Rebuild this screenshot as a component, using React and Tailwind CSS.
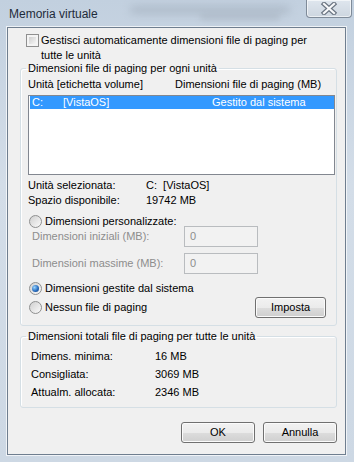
import React from 'react'

function Checkbox() {
  return (
    <div className="w-[13px] h-[13px] border border-[#8f8f8f] bg-[#f4f4f4] p-[2px] shrink-0">
      <div className="w-full h-full bg-[linear-gradient(135deg,#cfcfcf,#f6f6f6)]" />
    </div>
  )
}

function Radio({ checked }) {
  return (
    <div className="w-[13px] h-[13px] rounded-full border border-[#8e8f8f] bg-[linear-gradient(135deg,#cfcfcf,#fbfbfb)] flex items-center justify-center shrink-0">
      {checked && (
        <div className="w-[7px] h-[7px] rounded-full bg-[radial-gradient(circle_at_35%_35%,#9ad6ff,#2a6ec0_55%,#0c3a78)]" />
      )}
    </div>
  )
}

function Button({ children, className }) {
  return (
    <div
      className={`h-[21px] rounded-[3px] border border-[#707070] bg-[linear-gradient(#f2f2f2_0%,#ebebeb_50%,#dddddd_50%,#cfcfcf_100%)] shadow-[inset_0_0_0_1px_#fbfbfb] flex items-center justify-center text-black ${className}`}
    >
      {children}
    </div>
  )
}

function CloseGlyph() {
  return (
    <svg width="18" height="13" viewBox="0 0 18 13">
      <path d="M4 2 L14 11 M14 2 L4 11" stroke="#6b7582" strokeWidth="4.5" strokeLinecap="square" />
      <path d="M4 2 L14 11 M14 2 L4 11" stroke="#f7f8fa" strokeWidth="2.2" strokeLinecap="square" />
    </svg>
  )
}

export default function App() {
  return (
    <div className="w-[354px] h-[462px] relative overflow-hidden bg-[linear-gradient(180deg,#c2d0df,#d3dde8_40%,#cdd8e4)] font-['Liberation_Sans',Arial,sans-serif] text-[11px] text-black">
      {/* blurred glass backdrop */}
      <div className="absolute left-[130px] top-[6px] w-[160px] h-[8px] rounded-full bg-[#8e9aa8] opacity-40 blur-[4px]" />
      <div className="absolute left-[200px] top-[14px] w-[80px] h-[6px] rounded-full bg-[#9aa5b2] opacity-40 blur-[3px]" />

      {/* Title bar */}
      <div className="h-[27px] flex items-center pl-[9px]">
        <span className="text-[12px] text-[#1e2b3a]">Memoria virtuale</span>
      </div>
      <div className="absolute top-0 right-[2px] w-[46px] h-[18px] rounded-b-[4px] border border-t-0 border-[#7f8b99] bg-[linear-gradient(#dfe6ee,#cdd6e0)] shadow-[inset_0_0_0_1px_rgba(255,255,255,0.6)] flex items-center justify-center">
        <CloseGlyph />
      </div>

      {/* Client area */}
      <div className="ml-[7px] w-[339px] h-[428px] border border-[#6f7e8f] bg-[#f0f0f0] shadow-[0_0_0_1px_rgba(255,255,255,0.7)] flex flex-col">
        <div className="flex pl-[18px] pt-[5px] leading-[15px]">
          <div className="mt-[1px]"><Checkbox /></div>
          <div className="ml-[2px]">
            Gestisci automaticamente dimensioni file di paging per
            <br />
            tutte le unità
          </div>
        </div>

        <fieldset className="ml-[12px] w-[317px] border border-[#d5dfe5] rounded-[3px] pl-[7px] pr-0 pb-[7px] shadow-[inset_1px_1px_0_#fff]">
          <legend className="px-[2px] -ml-[2px] leading-[11px]">Dimensioni file di paging per ogni unità</legend>
          <div className="flex mt-[3px] leading-[15px]">
            <span className="w-[147px]">Unità [etichetta volume]</span>
            <span>Dimensioni file di paging (MB)</span>
          </div>
          <div className="mt-[3px] w-[307px] h-[80px] border border-[#828790] bg-white">
            <div className="ml-[1px] h-[13px] bg-[#3399ff] text-white flex items-center leading-[13px]">
              <span className="pl-[2px] w-[33px]">C:</span>
              <span className="w-[149px]">[VistaOS]</span>
              <span>Gestito dal sistema</span>
            </div>
          </div>
          <div className="mt-[3px] leading-[15px]">
            <div className="flex">
              <span className="w-[118px]">Unità selezionata:</span>
              <span>C:&nbsp;&nbsp;[VistaOS]</span>
            </div>
            <div className="flex">
              <span className="w-[118px]">Spazio disponibile:</span>
              <span>19742 MB</span>
            </div>
          </div>
          <div className="mt-[7px] h-[12px] flex items-center pl-[1px]">
            <Radio />
            <span className="ml-[3px]">Dimensioni personalizzate:</span>
          </div>
          <div className="mt-[-1px] flex items-center pl-[4px] text-[#8d8d8d]">
            <span className="w-[152px]">Dimensioni iniziali (MB):</span>
            <div className="w-[74px] h-[21px] border border-[#b9bcbf] bg-[#f2f2f2] pl-[5px] flex items-center">0</div>
          </div>
          <div className="mt-[6px] flex items-center pl-[4px] text-[#8d8d8d]">
            <span className="w-[152px]">Dimensioni massime (MB):</span>
            <div className="w-[74px] h-[21px] border border-[#b9bcbf] bg-[#f2f2f2] pl-[5px] flex items-center">0</div>
          </div>
          <div className="mt-[8px] h-[12px] flex items-center pl-[1px]">
            <Radio checked />
            <span className="ml-[3px]">Dimensioni gestite dal sistema</span>
          </div>
          <div className="mt-[3px] flex items-center pl-[1px]">
            <Radio />
            <span className="ml-[3px] flex-1">Nessun file di paging</span>
            <Button className="w-[71px] mr-[10px]">Imposta</Button>
          </div>
        </fieldset>

        <fieldset className="mt-[4px] ml-[12px] w-[317px] border border-[#d5dfe5] rounded-[3px] pl-[7px] pr-0 pb-[6px] shadow-[inset_1px_1px_0_#fff]">
          <legend className="px-[2px] -ml-[2px] leading-[12px]">Dimensioni totali file di paging per tutte le unità</legend>
          <div className="mt-[5px] pl-[3px] leading-[18px]">
            <div className="flex">
              <span className="w-[124px]">Dimens. minima:</span>
              <span>16 MB</span>
            </div>
            <div className="flex">
              <span className="w-[124px]">Consigliata:</span>
              <span>3069 MB</span>
            </div>
            <div className="flex">
              <span className="w-[124px]">Attualm. allocata:</span>
              <span>2346 MB</span>
            </div>
          </div>
        </fieldset>

        <div className="mt-[14px] flex justify-end gap-[8px] pr-[8px]">
          <Button className="w-[74px]">OK</Button>
          <Button className="w-[74px]">Annulla</Button>
        </div>
      </div>
    </div>
  )
}
